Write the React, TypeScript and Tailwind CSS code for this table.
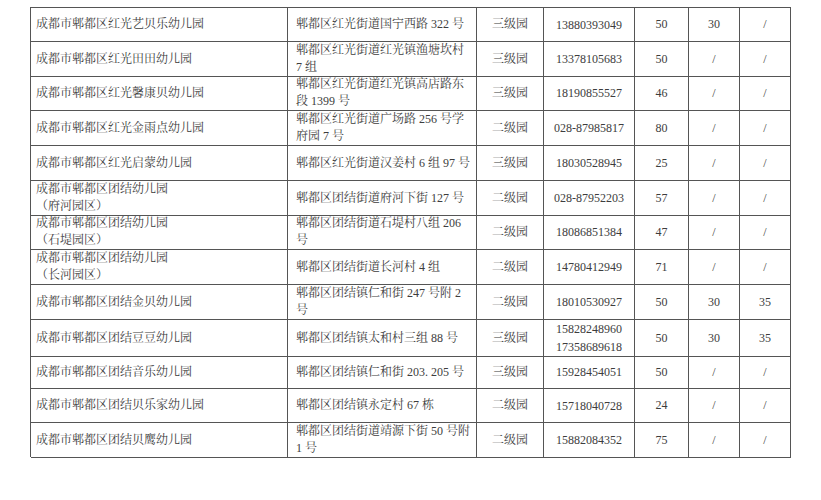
import React from "react";

type Row = {
  h: string;
  name: string[];
  addr: string[];
  level: string;
  phone: string[];
  a: string;
  b: string;
  c: string;
};

const rows: Row[] = [
  { h: "h-[34px]", name: ["成都市郫都区红光艺贝乐幼儿园"], addr: ["郫都区红光街道国宁西路 322 号"], level: "三级园", phone: ["13880393049"], a: "50", b: "30", c: "/" },
  { h: "h-[34px]", name: ["成都市郫都区红光田田幼儿园"], addr: ["郫都区红光街道红光镇渔塘坎村", "7 组"], level: "三级园", phone: ["13378105683"], a: "50", b: "/", c: "/" },
  { h: "h-[35px]", name: ["成都市郫都区红光馨康贝幼儿园"], addr: ["郫都区红光街道红光镇高店路东", "段 1399 号"], level: "三级园", phone: ["18190855527"], a: "46", b: "/", c: "/" },
  { h: "h-[35px]", name: ["成都市郫都区红光金雨点幼儿园"], addr: ["郫都区红光街道广场路 256 号学", "府园 7 号"], level: "二级园", phone: ["028-87985817"], a: "80", b: "/", c: "/" },
  { h: "h-[35px]", name: ["成都市郫都区红光启蒙幼儿园"], addr: ["郫都区红光街道汉姜村 6 组 97 号"], level: "三级园", phone: ["18030528945"], a: "25", b: "/", c: "/" },
  { h: "h-[34px]", name: ["成都市郫都区团结幼儿园", "（府河园区）"], addr: ["郫都区团结街道府河下街 127 号"], level: "二级园", phone: ["028-87952203"], a: "57", b: "/", c: "/" },
  { h: "h-[35px]", name: ["成都市郫都区团结幼儿园", "（石堤园区）"], addr: ["郫都区团结街道石堤村八组 206", "号"], level: "二级园", phone: ["18086851384"], a: "47", b: "/", c: "/" },
  { h: "h-[35px]", name: ["成都市郫都区团结幼儿园", "（长河园区）"], addr: ["郫都区团结街道长河村 4 组"], level: "二级园", phone: ["14780412949"], a: "71", b: "/", c: "/" },
  { h: "h-[35px]", name: ["成都市郫都区团结金贝幼儿园"], addr: ["郫都区团结镇仁和街 247 号附 2", "号"], level: "二级园", phone: ["18010530927"], a: "50", b: "30", c: "35" },
  { h: "h-[36px]", name: ["成都市郫都区团结豆豆幼儿园"], addr: ["郫都区团结镇太和村三组 88 号"], level: "三级园", phone: ["15828248960", "17358689618"], a: "50", b: "30", c: "35" },
  { h: "h-[33px]", name: ["成都市郫都区团结音乐幼儿园"], addr: ["郫都区团结镇仁和街 203. 205 号"], level: "三级园", phone: ["15928454051"], a: "50", b: "/", c: "/" },
  { h: "h-[34px]", name: ["成都市郫都区团结贝乐家幼儿园"], addr: ["郫都区团结镇永定村 67 栋"], level: "二级园", phone: ["15718040728"], a: "24", b: "/", c: "/" },
  { h: "h-[34px]", name: ["成都市郫都区团结贝鹰幼儿园"], addr: ["郫都区团结街道靖源下街 50 号附", "1 号"], level: "二级园", phone: ["15882084352"], a: "75", b: "/", c: "/" },
];

const cell = "border-r border-b border-[#555] flex flex-col justify-center";

export default function App() {
  return (
    <div
      className="min-h-[500px] w-[821px] bg-white pt-[7px] pl-[30px] text-[12px] leading-[17px] text-[#3d3d3d]"
      style={{ fontFamily: '"Liberation Serif", "Noto Serif CJK SC", "Noto Sans CJK SC", serif' }}
    >
      <div className="w-[761px] border-t border-l border-[#555]">
        {rows.map((r, i) => (
          <div key={i} className={`grid grid-cols-[257px_189px_67px_91px_54px_51px_51px] ${r.h}`}>
            <div className={`${cell} pl-[5px]`}>
              {r.name.map((t, j) => (
                <span key={j} className="whitespace-nowrap">{t}</span>
              ))}
            </div>
            <div className={`${cell} pl-[8px]`}>
              {r.addr.map((t, j) => (
                <span key={j} className="whitespace-nowrap">{t}</span>
              ))}
            </div>
            <div className={`${cell} items-center`}>{r.level}</div>
            <div className={`${cell} items-center leading-[18px]`}>
              {r.phone.map((t, j) => (
                <span key={j}>{t}</span>
              ))}
            </div>
            <div className={`${cell} items-center`}>{r.a}</div>
            <div className={`${cell} items-center`}>{r.b}</div>
            <div className={`${cell} items-center`}>{r.c}</div>
          </div>
        ))}
      </div>
    </div>
  );
}
